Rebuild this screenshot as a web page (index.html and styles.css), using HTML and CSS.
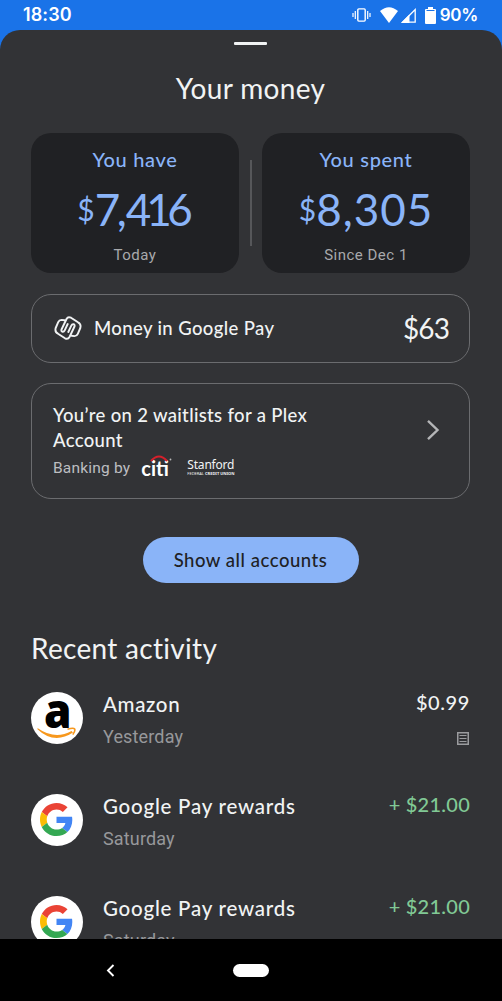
FILE: index.html
```html
<!DOCTYPE html>
<html lang="en">
<head>
<meta charset="utf-8">
<title>Your money</title>
<link rel="stylesheet" href="styles.css">
</head>
<body>
<svg width="0" height="0" class="defs">
  <symbol id="google" viewBox="0 0 48 48">
    <path fill="#ea4335" d="M24 9.5c3.54 0 6.71 1.22 9.21 3.6l6.85-6.85C35.9 2.38 30.47 0 24 0 14.62 0 6.51 5.38 2.56 13.22l7.98 6.19C12.43 13.72 17.74 9.5 24 9.5z"/>
    <path fill="#4285f4" d="M46.98 24.55c0-1.57-.15-3.09-.38-4.55H24v9.02h12.94c-.58 2.96-2.26 5.48-4.78 7.18l7.73 6c4.51-4.18 7.09-10.36 7.09-17.65z"/>
    <path fill="#fbbc05" d="M10.53 28.59c-.48-1.45-.76-2.99-.76-4.59s.27-3.14.76-4.59l-7.98-6.19C.92 16.46 0 20.12 0 24s.92 7.54 2.56 10.78l7.97-6.19z"/>
    <path fill="#34a853" d="M24 48c6.48 0 11.93-2.13 15.89-5.81l-7.73-6c-2.15 1.45-4.92 2.3-8.16 2.3-6.26 0-11.57-4.22-13.47-9.91l-7.98 6.19C6.51 42.62 14.62 48 24 48z"/>
  </symbol>
</svg>
<div class="phone">
  <header class="status">
    <span class="clock">18:30</span>
    <div class="status-icons">
      <svg class="vibrate" width="19" height="14" viewBox="0 0 19 14"><rect x="5.8" y=".9" width="7.4" height="12.2" rx="1" fill="none" stroke="#fff" stroke-width="1.4"/><path d="M3.3 3v8M15.7 3v8M1 5v4M18 5v4" stroke="#fff" stroke-width="1.2"/></svg>
      <svg class="wifi" width="18" height="16" viewBox="0 0 18 16"><path fill="#fff" d="M0 4Q9-3.600 18 4L9 16z"/></svg>
      <svg class="signal" width="15" height="15" viewBox="0 0 15 15"><path fill="none" stroke="#fff" stroke-width="1.3" d="M1.600 14.200H14.200V1.600z"/><path fill="#fff" d="M0 15L8.500 6.500V15z"/></svg>
      <svg class="battery" width="11" height="17" viewBox="0 0 11 17"><path fill="#fff" d="M3 0h5v2h2q1 0 1 1v13q0 1-1 1H1q-1 0-1-1V3q0-1 1-1h2z"/><path d="M1.500 3.500h8" stroke="#1a73e8" stroke-width="1"/></svg>
      <span class="percent">90%</span>
    </div>
  </header>
  <main class="sheet">
    <div class="handle"></div>
    <h1 class="title">Your money</h1>
    <section class="totals">
      <div class="total">
        <span class="total-label">You have</span>
        <span class="amount"><span class="currency">$</span><span class="figure"><span class="kern-a">7</span><span class="kern-b">,</span><span class="kern-c">4</span><span class="kern-d">1</span>6</span></span>
        <span class="period">Today</span>
      </div>
      <div class="divider"></div>
      <div class="total">
        <span class="total-label">You spent</span>
        <span class="amount"><span class="currency">$</span><span class="figure fig-spent">8,305</span></span>
        <span class="period">Since Dec 1</span>
      </div>
    </section>
    <section class="card balance">
      <svg class="pay-icon" width="28" height="24" viewBox="0 0 28 24" fill="none" stroke="#f1f3f4" stroke-width="1.900" stroke-linejoin="round" stroke-linecap="round">
        <path id="pay-half" d="M10.500 4.200 7.500 3.900Q5.200 3.900 4.200 6.200L1.700 12Q.6 16 4 17.700L11 22.300Q14 23.800 15.500 21L20.500 10.500Q21 8.500 19.400 8.300 18 8.100 17.300 9.600L14.300 16"/>
        <use href="#pay-half" transform="rotate(180 14 12)"/>
      </svg>
      <span class="balance-name">Money in Google Pay</span>
      <span class="balance-value">$63</span>
    </section>
    <section class="card waitlist">
      <div class="waitlist-body">
        <h2 class="waitlist-title">You’re on 2 waitlists for a Plex<br>Account</h2>
        <div class="banks">
          <span class="banking">Banking by</span>
          <span class="citi">citi<svg class="citi-arc" width="32" height="7" viewBox="0 0 32 7"><path d="M1 6Q9-3 17 6" fill="none" stroke="#d5202b" stroke-width="2.200"/><circle cx="20.500" cy="4.500" r=".9" fill="#bbb"/></svg></span>
          <span class="stanford"><span class="stanford-name">Stanford</span><span class="stanford-sub">FEDERAL <b>CREDIT UNION</b></span></span>
        </div>
      </div>
      <svg class="chevron" width="14" height="22" viewBox="0 0 14 22"><path d="M2 1.800 11.500 11 2 20.200" fill="none" stroke="#b4b5b7" stroke-width="2.400"/></svg>
    </section>
    <button class="show-all">Show all accounts</button>
    <h2 class="recent">Recent activity</h2>
    <ul class="activity">
      <li class="item">
        <span class="avatar"><span class="amazon-letter">a</span><svg class="smile" width="40" height="14" viewBox="0 0 40 14"><path fill="#f7981d" d="M.8 1.200Q18 13.200 34.500 4L36 5.600Q17 18 .2 2z"/><path d="M30.500 2.200Q36.500 .5 37.700 2 38.500 3.800 35.800 7.600" fill="none" stroke="#f7981d" stroke-width="1.600"/></svg></span>
        <div class="who"><span class="name">Amazon</span><span class="day">Yesterday</span></div>
        <div class="side"><span class="price cost">$0.99</span><svg class="receipt" width="12" height="13" viewBox="0 0 12 13"><rect x=".75" y=".75" width="10.500" height="11.500" fill="none" stroke="#9b9c9f" stroke-width="1.500"/><path d="M2.500 3.500h7M2.500 6.500h7M2.500 9.500h7" stroke="#9b9c9f" stroke-width="1.200"/></svg></div>
      </li>
      <li class="item">
        <span class="avatar"><svg class="g" width="33" height="33"><use href="#google"/></svg></span>
        <div class="who"><span class="name rewards">Google Pay rewards</span><span class="day">Saturday</span></div>
        <div class="side"><span class="price credit">+ $21.00</span></div>
      </li>
      <li class="item">
        <span class="avatar"><svg class="g" width="33" height="33"><use href="#google"/></svg></span>
        <div class="who"><span class="name rewards">Google Pay rewards</span><span class="day">Saturday</span></div>
        <div class="side"><span class="price credit">+ $21.00</span></div>
      </li>
    </ul>
  </main>
  <nav class="nav">
    <svg class="back" width="9" height="13" viewBox="0 0 9 13"><path d="M7.500 1 2 6.500 7.500 12" fill="none" stroke="#fff" stroke-width="1.900"/></svg>
    <span class="home"></span>
  </nav>
</div>
</body>
</html>
```

FILE: styles.css
```css
* { box-sizing: border-box; }
body { margin: 0; background: #000; font-family: Lato, "Open Sans", sans-serif; font-variant-ligatures: none; color: #f1f3f4; }
h1, h2, ul { margin: 0; padding: 0; font-weight: 400; list-style: none; }
svg { display: block; flex: none; }
span { white-space: nowrap; }
.defs { position: absolute; }
.phone { width: 502px; height: 1001px; overflow: hidden; display: flex; flex-direction: column; background: #1a73e8; }
.status { height: 30px; flex: none; display: flex; justify-content: space-between; padding: 0 24px 0 23px; font: 600 18px/30px Inter, sans-serif; color: #fff; }
.clock { letter-spacing: .1px; }
.status-icons { display: flex; align-items: center; }
.wifi { margin-left: 9px; }
.signal { margin-left: 3px; }
.battery { margin-left: 9px; }
.percent { margin-left: 4px; font-size: 17px; letter-spacing: -.3px; }

.sheet { height: 909px; flex: none; overflow: hidden; background: #323336; border-radius: 20px 20px 0 0; padding: 12px 32px 0 31px; display: flex; flex-direction: column; }
.handle { width: 33px; height: 3px; border-radius: 1px; background: #f1f3f4; margin: 0 auto; flex: none; }
.title { height: 36px; line-height: 36px; margin-top: 25px; font-size: 28px; letter-spacing: .35px; text-align: center; }

.totals { display: flex; height: 140px; align-items: center; justify-content: space-between; flex: none; margin-top: 27px; }
.total { width: 208px; height: 140px; border-radius: 20px; background: #202124; display: flex; flex-direction: column; align-items: center; color: #8ab4f8; }
.total-label { height: 24px; line-height: 24px; margin-top: 14px; font-size: 20px; font-weight: 500; letter-spacing: .7px; }
.amount { display: flex; align-items: center; height: 54px; margin-top: 11px; line-height: 54px; }
.currency { font-size: 30px; }
.figure { font-size: 44px; }
.kern-a { letter-spacing: -3.500px; }
.kern-b { letter-spacing: -1px; }
.kern-c { letter-spacing: -5px; }
.kern-d { letter-spacing: -4.500px; }
.fig-spent { letter-spacing: 1px; }
.period { font: 400 15px/18px Roboto, sans-serif; color: #a8a9ac; margin-top: 10px; letter-spacing: .5px; }
.divider { width: 2px; height: 86px; background: #56575a; }

.card { border: 1px solid #6b6c6f; border-radius: 20px; display: flex; align-items: center; flex: none; }
.balance { height: 69px; margin-top: 21px; padding: 0 20px 2px 22px; }
.balance-name { margin-left: 12px; font-size: 18.500px; font-weight: 500; letter-spacing: .38px; }
.balance-value { margin-left: auto; font-size: 28px; letter-spacing: -.9px; }
.waitlist { height: 116px; margin-top: 20px; padding: 0 29px 0 21px; justify-content: space-between; }
.waitlist-title { font-size: 18.500px; line-height: 25px; font-weight: 500; letter-spacing: .33px; }
.banks { display: flex; align-items: center; height: 24px; margin-top: 3px; }
.banking { font: 400 15.500px/24px Roboto, sans-serif; color: #bdbec1; letter-spacing: .2px; }
.citi { position: relative; margin-left: 11px; width: 28px; font: 700 20px/24px Lato, sans-serif; color: #fff; }
.citi-arc { position: absolute; left: 9px; top: -1px; }
.stanford { margin-left: 18px; display: flex; flex-direction: column; }
.stanford-name { font: 400 12px/12px "Noto Sans", sans-serif; letter-spacing: -.2px; }
.stanford-sub { font: 400 4px/5px "Noto Sans", sans-serif; }
.chevron { margin-top: -22px; }

.show-all { width: 216px; height: 46px; flex: none; margin: 38px auto 0; padding: 0; border: 0; border-radius: 23px; background: #8ab4f8; color: #202124; font: 500 18.500px/44px Lato, sans-serif; letter-spacing: .53px; font-variant-ligatures: none; }
.recent { height: 36px; line-height: 36px; margin-top: 47px; font-size: 28px; letter-spacing: .3px; }
.activity { margin-top: 24px; }
.item { height: 102px; display: flex; }
.avatar { position: relative; width: 52px; height: 52px; border-radius: 50%; background: #fff; flex: none; margin-top: 2px; }
.g { margin: 9px; }
.amazon-letter { position: absolute; left: 12px; top: -11px; font: 800 47px/58px "Open Sans", sans-serif; color: #000; transform: scaleX(.94); }
.smile { position: absolute; left: 6px; top: 35px; }
.who { display: flex; flex-direction: column; margin-left: 20px; }
.name { font-size: 20.500px; line-height: 28px; font-weight: 500; letter-spacing: .65px; }
.rewards { letter-spacing: .77px; }
.day { font: 400 18px/24px Roboto, sans-serif; color: #97989b; margin-top: 7px; letter-spacing: .15px; }
.side { margin-left: auto; display: flex; flex-direction: column; align-items: flex-end; }
.price { font-size: 20px; line-height: 24px; font-weight: 500; letter-spacing: .25px; }
.cost { letter-spacing: .6px; }
.receipt { margin: 18px 1px 0 0; }
.credit { color: #81c995; }
.nav { height: 62px; flex: none; background: #000; display: flex; align-items: center; padding-left: 106px; }
.home { width: 36px; height: 13px; border-radius: 7px; background: #fff; margin-left: 118px; }
```
